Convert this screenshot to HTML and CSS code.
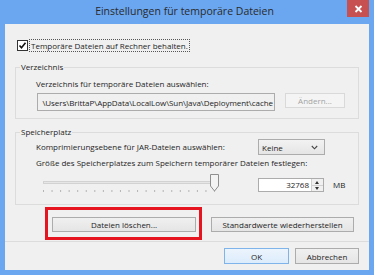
FILE: index.html
```html
<!DOCTYPE html>
<html lang="de">

<head>
  <meta charset="UTF-8">
  <meta name="viewport" content="width=device-width, initial-scale=1.0">
  <title>Einstellungen für temporäre Dateien</title>
  <link rel="stylesheet" href="styles.css">
</head>

<body>

  <!-- Dialog Window -->
  <div class="window">

    <!-- Title Bar -->
    <div class="titlebar">
      <span></span>
      <span class="title">Einstellungen für temporäre Dateien</span>
      <span class="close-btn">
        <svg width="9" height="8" viewBox="0 0 9 8">
          <path d="M1.5 1 L7.5 7 M7.5 1 L1.5 7" stroke="#fff" stroke-width="1.8" />
        </svg>
      </span>
    </div>

    <div class="client">

      <!-- Keep Files Checkbox -->
      <div class="keep-row">
        <span class="checkbox">
          <svg width="11" height="11" viewBox="0 0 11 11">
            <rect x="0.5" y="0.5" width="10" height="10" fill="#fff" stroke="#333" />
            <path d="M2.5 5.5 L4.5 7.8 L8.5 2.8" fill="none" stroke="#111" stroke-width="1.6" />
          </svg>
        </span>
        <span class="focus-label">Temporäre Dateien auf Rechner behalten.</span>
      </div>

      <!-- Directory Group -->
      <fieldset class="group">
        <legend>Verzeichnis</legend>
        <div class="group-body">
          <div class="dir-label">Verzeichnis für temporäre Dateien auswählen:</div>
          <div class="dir-row">
            <div class="path-field"><span>\Users\BrittaP\AppData\LocalLow\Sun\Java\Deployment\cache</span></div>
            <button class="btn" disabled>Ändern...</button>
          </div>
        </div>
      </fieldset>

      <!-- Storage Group -->
      <fieldset class="group">
        <legend>Speicherplatz</legend>
        <div class="group-body storage-grid">
          <div class="cell-text">Komprimierungsebene für JAR-Dateien auswählen:</div>
          <div class="select">
            <span>Keine</span>
            <svg width="7" height="5" viewBox="0 0 7 5">
              <path d="M0.8 1 L3.5 3.8 L6.2 1" fill="none" stroke="#444" stroke-width="1.1" />
            </svg>
          </div>
          <div></div>

          <div class="cell-text size-label">Größe des Speicherplatzes zum Speichern temporärer Dateien festlegen:</div>

          <div class="slider">
            <svg width="182" height="20" viewBox="0 0 182 20">
              <rect x="3.5" y="7.5" width="168" height="2" fill="#e6e6e6" stroke="#d2d2d2" />
              <g id="ticks" fill="#b4b4b4"></g>
              <path d="M170.5 0.5 H178.5 V12 L174.5 17 L170.5 12 Z" fill="#f3f3f3" stroke="#8f8f8f" />
            </svg>
          </div>
          <div class="spinner">
            <span class="spin-value">32768</span>
            <span class="spin-buttons">
              <span class="spin-up"></span>
              <span class="spin-down"></span>
            </span>
          </div>
          <div class="unit">MB</div>
        </div>
      </fieldset>

      <!-- Delete / Defaults -->
      <div class="action-row">
        <div class="highlight">
          <button class="btn delete-btn">Dateien löschen...</button>
        </div>
        <button class="btn defaults-btn">Standardwerte wiederherstellen</button>
      </div>

      <!-- Footer Buttons -->
      <div class="footer">
        <button class="btn default">OK</button>
        <button class="btn">Abbrechen</button>
      </div>

    </div>
  </div>

  <script>
    // slider ticks
    const ticks = document.getElementById('ticks');
    for (let i = 0; i <= 20; i++) {
      const x = 3 + i * 8.55;
      const r = document.createElementNS('http://www.w3.org/2000/svg', 'rect');
      r.setAttribute('x', x.toFixed(2));
      r.setAttribute('y', 16);
      r.setAttribute('width', 1);
      r.setAttribute('height', 2);
      ticks.appendChild(r);
    }
  </script>

</body>

</html>
```

FILE: styles.css
```css
/* Page */
body {
  margin: 0;
  background: #fff;
  font-family: "Open Sans", "Noto Sans", sans-serif;
  font-size: 8px;
  color: #1e1e1e;
}

/* Window Frame */
.window {
  width: 374px;
  height: 275px;
  box-sizing: border-box;
  padding: 0 5px 5px;
  background: #6ba7f0;
  display: flex;
  flex-direction: column;
}

/* Title Bar */
.titlebar {
  height: 24px;
  flex: none;
  display: grid;
  grid-template-columns: 1fr auto 1fr;
  align-items: start;
  margin: 0 -5px;
  padding-right: 5px;
}

.title {
  font-size: 10.5px;
  line-height: 24px;
  color: #2a2a2a;
  margin-top: -1px;
}

.close-btn {
  justify-self: end;
  width: 22px;
  height: 17px;
  background: #c75050;
  display: flex;
  justify-content: center;
  align-items: center;
}

/* Client Area */
.client {
  flex: 1;
  background: #f0f0f0;
  display: flex;
  flex-direction: column;
}

/* Keep Files Row */
.keep-row {
  height: 17px;
  margin-top: 13px;
  padding-left: 12px;
  display: flex;
  align-items: center;
}

.checkbox {
  width: 11px;
  height: 11px;
  display: flex;
}

.focus-label {
  margin-left: 1px;
  padding: 0 1px;
  line-height: 11px;
  border: 1px dotted #555;
}

/* Group Boxes */
.group {
  margin: 6px 10px 0;
  padding: 0 0 7px;
  border: 1px solid #dcdcdc;
  min-width: 0;
}

.group legend {
  margin-left: 4px;
  padding: 0 1px;
  line-height: 14px;
}

.group-body {
  padding-left: 20px;
}

.dir-label {
  line-height: 14px;
  margin-top: 3px;
}

.dir-row {
  display: flex;
  margin-top: 2px;
  height: 18px;
}

.path-field {
  width: 238px;
  margin-left: 1px;
  box-sizing: border-box;
  border: 1px solid #acacac;
  background: #f0f0f0;
  display: flex;
  justify-content: flex-end;
  align-items: center;
  white-space: nowrap;
  padding-right: 1px;
  letter-spacing: -0.05px;
}

.dir-row .btn {
  width: 60px;
  margin-left: 10px;
}

/* Storage Grid */
.storage-grid {
  display: grid;
  grid-template-columns: 222px 67px auto;
  grid-template-rows: 16px 14px 22px;
  row-gap: 1px;
  padding-bottom: 4px;
}

.cell-text {
  line-height: 16px;
}

.size-label {
  grid-column: 1 / 4;
  line-height: 14px;
}

.select {
  box-sizing: border-box;
  border: 1px solid #acacac;
  background: linear-gradient(#f2f2f2, #e5e5e5);
  display: flex;
  justify-content: space-between;
  align-items: center;
  padding: 0 6px 0 3px;
}

.slider {
  margin-top: 3px;
  margin-left: 4px;
}

.spinner {
  align-self: end;
  margin-bottom: 1px;
  height: 14px;
  width: 66px;
  box-sizing: border-box;
  border: 1px solid #acacac;
  background: #fff;
  display: flex;
}

.spin-value {
  flex: 1;
  text-align: right;
  line-height: 12px;
  padding-right: 2px;
}

.spin-buttons {
  width: 11px;
  display: flex;
  flex-direction: column;
  border-left: 1px solid #d0d0d0;
  background: #f0f0f0;
}

.spin-up,
.spin-down {
  flex: 1;
  position: relative;
}

.spin-up {
  border-bottom: 1px solid #d0d0d0;
}

.spin-up::after,
.spin-down::after {
  content: "";
  position: absolute;
  left: 3px;
  border-left: 2.5px solid transparent;
  border-right: 2.5px solid transparent;
}

.spin-up::after {
  top: 1.5px;
  border-bottom: 3px solid #333;
}

.spin-down::after {
  top: 1.5px;
  border-top: 3px solid #333;
}

.unit {
  align-self: end;
  margin-bottom: 1px;
  margin-left: 8px;
  line-height: 14px;
}

/* Buttons */
.btn {
  font-family: inherit;
  font-size: 8px;
  color: #1e1e1e;
  height: 15px;
  padding: 0;
  border: 1px solid #acacac;
  background: linear-gradient(#f0f0f0, #e5e5e5);
  line-height: 13px;
}

.btn:disabled {
  color: #a3a3a3;
  border-color: #d9d9d9;
  background: #f4f4f4;
}

.btn.default {
  border-color: #7eb4ea;
  background: linear-gradient(#ecf4fc, #dcecfc);
}

/* Action Row */
.action-row {
  display: flex;
  align-items: flex-start;
  margin-top: 2px;
  padding-left: 40px;
}

.highlight {
  border: 3px solid #e5141e;
  padding: 7px 3px 5px 4px;
}

.delete-btn {
  width: 144px;
  display: block;
}

.defaults-btn {
  width: 143px;
  margin-left: 9px;
  margin-top: 10px;
}

/* Footer */
.footer {
  flex: 1;
  margin-top: 1px;
  border-top: 1px solid #dcdcdc;
  display: flex;
  justify-content: flex-end;
  align-items: flex-start;
  gap: 6px;
  padding: 6px 10px 0 0;
}

.footer .btn {
  height: 16px;
  width: 64px;
}

.footer .btn.default {
  width: 65px;
}
```
